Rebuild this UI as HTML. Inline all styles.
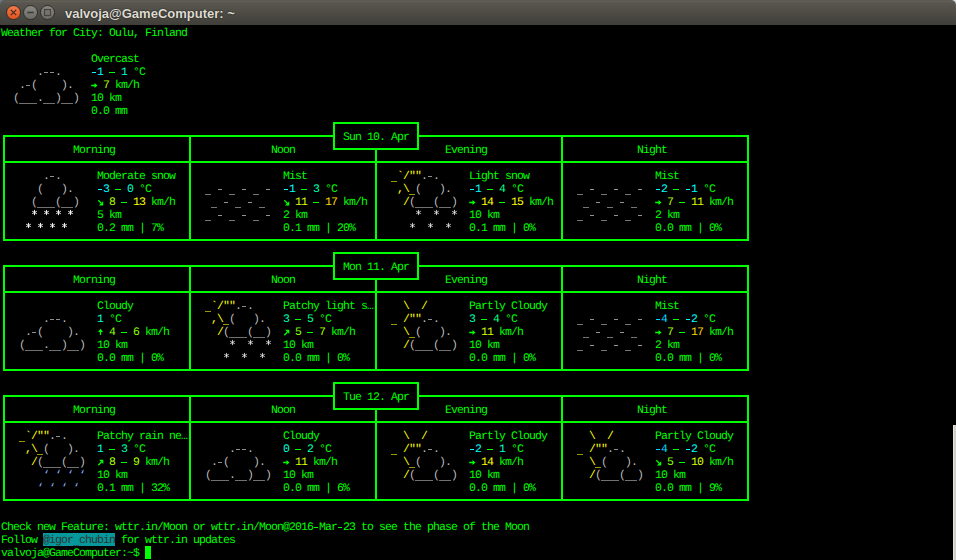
<!DOCTYPE html><html><head><meta charset="utf-8"><style>
*{margin:0;padding:0}
html,body{width:956px;height:560px;overflow:hidden;background:#000}
#w{position:absolute;left:0;top:0;width:956px;height:560px;background:#000;overflow:hidden}
.t{position:absolute;white-space:pre;font-family:"Liberation Mono",monospace;font-size:11.50px;line-height:13px;height:13px;letter-spacing:-0.9011px;color:#00ff00;text-rendering:geometricPrecision}
.b{font-weight:bold}
.u{position:relative;top:2px}
.h{position:absolute;height:2px;background:#00ff00}
.v{position:absolute;width:2px;background:#00ff00}
#tb{position:absolute;left:0;top:0;width:956px;height:25px;background:linear-gradient(#5c5a52,#3f3e39);border-radius:5px 5px 0 0}
#title{position:absolute;left:65px;top:5px;text-shadow:0 0 1.5px rgba(0,0,0,.9);font-family:"Liberation Sans",sans-serif;font-weight:bold;font-size:13px;line-height:17px;color:#dfdbd2;white-space:pre}
.btn{position:absolute;top:5px;width:15px;height:15px;border-radius:50%;box-sizing:border-box;border:1px solid #302f2b}
#cur{position:absolute;left:145px;top:546px;width:6px;height:13px;background:#00ff00}
#sb{position:absolute;left:953px;top:425px;width:3px;height:135px;background:#d3d0cc;border-left:1px solid #e6e3df;box-sizing:border-box}

</style></head><body><div id="w">
<div style="position:absolute;left:0;top:0;width:20px;height:8px;background:#6d778a"></div>
<div style="position:absolute;left:936px;top:0;width:20px;height:8px;background:#d6dbdf"></div>
<div id="tb"></div>
<div style="position:absolute;left:3px;top:1px;width:950px;height:1px;background:#625f55"></div>
<div class="btn" style="left:6px;background:linear-gradient(#f2784a,#e4531c)"></div>
<div class="btn" style="left:23px;background:linear-gradient(#8a8983,#6c6b66)"></div>
<div class="btn" style="left:40px;background:linear-gradient(#8a8983,#6c6b66)"></div>
<svg style="position:absolute;left:0;top:0" width="60" height="25"><g stroke="#3a2a22" stroke-width="1.1" fill="none"><path d="M10.8 9.8 L16.2 15.2 M16.2 9.8 L10.8 15.2"/></g><path d="M27.3 12.5 H33.7" stroke="#3c3b37" stroke-width="1.6"/><rect x="44.5" y="9.5" width="6" height="6" fill="#74736d" stroke="#45443f" stroke-width="1.2"/></svg>
<div id="title">valvoja@GameComputer: ~</div>
<div class="t" style="left:1px;top:27px">Weather for City: Oulu, Finland</div>
<div class="t" style="left:91px;top:53px">Overcast</div>
<div style="position:absolute;left:44px;top:72px;width:4px;height:1px;background:#bcbcbc;opacity:.75"></div>
<div style="position:absolute;left:50px;top:72px;width:4px;height:1px;background:#bcbcbc;opacity:.75"></div>
<div class="t" style="left:37px;top:66px;color:#bcbcbc">.  .</div>
<div style="position:absolute;left:92px;top:72px;width:4px;height:1px;background:#00ffff"></div>
<div class="t" style="left:91px;top:66px;color:#00ffff"> 1</div>
<div style="position:absolute;left:109px;top:72px;width:6px;height:1px;background:#00ff00"></div>
<div class="t" style="left:121px;top:66px;color:#00ffd7">1</div>
<div class="t" style="left:127px;top:66px"> °C</div>
<div style="position:absolute;left:26px;top:85px;width:4px;height:1px;background:#bcbcbc;opacity:.75"></div>
<div class="t" style="left:19px;top:79px;color:#bcbcbc">. (    ).</div>
<div class="t" style="left:103px;top:79px;color:#afff00">7</div>
<div class="t" style="left:109px;top:79px"> km/h</div>
<div style="position:absolute;left:19px;top:103px;width:6px;height:1px;background:#bcbcbc;opacity:.6"></div>
<div style="position:absolute;left:25px;top:103px;width:6px;height:1px;background:#bcbcbc;opacity:.6"></div>
<div style="position:absolute;left:31px;top:103px;width:6px;height:1px;background:#bcbcbc;opacity:.6"></div>
<div style="position:absolute;left:43px;top:103px;width:6px;height:1px;background:#bcbcbc;opacity:.6"></div>
<div style="position:absolute;left:49px;top:103px;width:6px;height:1px;background:#bcbcbc;opacity:.6"></div>
<div style="position:absolute;left:61px;top:103px;width:6px;height:1px;background:#bcbcbc;opacity:.6"></div>
<div style="position:absolute;left:67px;top:103px;width:6px;height:1px;background:#bcbcbc;opacity:.6"></div>
<div class="t" style="left:13px;top:92px;color:#bcbcbc">(   .  )  )</div>
<div class="t" style="left:91px;top:92px">10 km</div>
<div class="t" style="left:91px;top:105px">0.0 mm</div>
<div class="t" style="left:343px;top:131px">Sun 10. Apr</div>
<div class="t" style="left:73px;top:144px">Morning</div>
<div class="t" style="left:271px;top:144px">Noon</div>
<div class="t" style="left:445px;top:144px">Evening</div>
<div class="t" style="left:637px;top:144px">Night</div>
<div style="position:absolute;left:50px;top:176px;width:4px;height:1px;background:#bcbcbc;opacity:.75"></div>
<div class="t" style="left:43px;top:170px;color:#bcbcbc">. .</div>
<div class="t" style="left:97px;top:170px">Moderate snow</div>
<div class="t" style="left:283px;top:170px">Mist</div>
<div style="position:absolute;left:391px;top:181px;width:6px;height:1px;background:#ffff00;opacity:.6"></div>
<div class="t" style="left:391px;top:170px;color:#ffff00"> `/&quot;&quot;</div>
<div style="position:absolute;left:428px;top:176px;width:4px;height:1px;background:#bcbcbc;opacity:.75"></div>
<div class="t" style="left:421px;top:170px;color:#bcbcbc">. .</div>
<div class="t" style="left:469px;top:170px">Light snow</div>
<div class="t" style="left:655px;top:170px">Mist</div>
<div class="t" style="left:37px;top:183px;color:#bcbcbc">(   ).</div>
<div style="position:absolute;left:98px;top:189px;width:4px;height:1px;background:#00ffff"></div>
<div class="t" style="left:97px;top:183px;color:#00ffff"> 3</div>
<div style="position:absolute;left:115px;top:189px;width:6px;height:1px;background:#00ff00"></div>
<div class="t" style="left:127px;top:183px;color:#00ffd7">0</div>
<div class="t" style="left:133px;top:183px"> °C</div>
<div style="position:absolute;left:205px;top:194px;width:6px;height:1px;background:#c6c6c6;opacity:.6"></div>
<div style="position:absolute;left:218px;top:189px;width:4px;height:1px;background:#c6c6c6;opacity:.75"></div>
<div style="position:absolute;left:229px;top:194px;width:6px;height:1px;background:#c6c6c6;opacity:.6"></div>
<div style="position:absolute;left:242px;top:189px;width:4px;height:1px;background:#c6c6c6;opacity:.75"></div>
<div style="position:absolute;left:253px;top:194px;width:6px;height:1px;background:#c6c6c6;opacity:.6"></div>
<div style="position:absolute;left:266px;top:189px;width:4px;height:1px;background:#c6c6c6;opacity:.75"></div>
<div style="position:absolute;left:284px;top:189px;width:4px;height:1px;background:#00ffff"></div>
<div class="t" style="left:283px;top:183px;color:#00ffff"> 1</div>
<div style="position:absolute;left:301px;top:189px;width:6px;height:1px;background:#00ff00"></div>
<div class="t" style="left:313px;top:183px;color:#00ffaf">3</div>
<div class="t" style="left:319px;top:183px"> °C</div>
<div style="position:absolute;left:409px;top:194px;width:6px;height:1px;background:#ffff00;opacity:.6"></div>
<div class="t" style="left:397px;top:183px;color:#ffff00">,\ </div>
<div class="t" style="left:415px;top:183px;color:#bcbcbc">(   ).</div>
<div style="position:absolute;left:470px;top:189px;width:4px;height:1px;background:#00ffff"></div>
<div class="t" style="left:469px;top:183px;color:#00ffff"> 1</div>
<div style="position:absolute;left:487px;top:189px;width:6px;height:1px;background:#00ff00"></div>
<div class="t" style="left:499px;top:183px;color:#00ff87">4</div>
<div class="t" style="left:505px;top:183px"> °C</div>
<div style="position:absolute;left:577px;top:194px;width:6px;height:1px;background:#c6c6c6;opacity:.6"></div>
<div style="position:absolute;left:590px;top:189px;width:4px;height:1px;background:#c6c6c6;opacity:.75"></div>
<div style="position:absolute;left:601px;top:194px;width:6px;height:1px;background:#c6c6c6;opacity:.6"></div>
<div style="position:absolute;left:614px;top:189px;width:4px;height:1px;background:#c6c6c6;opacity:.75"></div>
<div style="position:absolute;left:625px;top:194px;width:6px;height:1px;background:#c6c6c6;opacity:.6"></div>
<div style="position:absolute;left:638px;top:189px;width:4px;height:1px;background:#c6c6c6;opacity:.75"></div>
<div style="position:absolute;left:656px;top:189px;width:4px;height:1px;background:#00ffff"></div>
<div class="t" style="left:655px;top:183px;color:#00ffff"> 2</div>
<div style="position:absolute;left:673px;top:189px;width:6px;height:1px;background:#00ff00"></div>
<div style="position:absolute;left:686px;top:189px;width:4px;height:1px;background:#00ffff"></div>
<div class="t" style="left:685px;top:183px;color:#00ffff"> 1</div>
<div class="t" style="left:697px;top:183px"> °C</div>
<div style="position:absolute;left:37px;top:207px;width:6px;height:1px;background:#bcbcbc;opacity:.6"></div>
<div style="position:absolute;left:43px;top:207px;width:6px;height:1px;background:#bcbcbc;opacity:.6"></div>
<div style="position:absolute;left:49px;top:207px;width:6px;height:1px;background:#bcbcbc;opacity:.6"></div>
<div style="position:absolute;left:61px;top:207px;width:6px;height:1px;background:#bcbcbc;opacity:.6"></div>
<div style="position:absolute;left:67px;top:207px;width:6px;height:1px;background:#bcbcbc;opacity:.6"></div>
<div class="t" style="left:31px;top:196px;color:#bcbcbc">(   (  )</div>
<div class="t" style="left:109px;top:196px;color:#afff00">8</div>
<div style="position:absolute;left:121px;top:202px;width:6px;height:1px;background:#00ff00"></div>
<div class="t" style="left:133px;top:196px;color:#ffff00">13</div>
<div class="t" style="left:145px;top:196px"> km/h</div>
<div style="position:absolute;left:211px;top:207px;width:6px;height:1px;background:#c6c6c6;opacity:.6"></div>
<div style="position:absolute;left:224px;top:202px;width:4px;height:1px;background:#c6c6c6;opacity:.75"></div>
<div style="position:absolute;left:235px;top:207px;width:6px;height:1px;background:#c6c6c6;opacity:.6"></div>
<div style="position:absolute;left:248px;top:202px;width:4px;height:1px;background:#c6c6c6;opacity:.75"></div>
<div style="position:absolute;left:259px;top:207px;width:6px;height:1px;background:#c6c6c6;opacity:.6"></div>
<div class="t" style="left:295px;top:196px;color:#d7ff00">11</div>
<div style="position:absolute;left:313px;top:202px;width:6px;height:1px;background:#00ff00"></div>
<div class="t" style="left:325px;top:196px;color:#ffd700">17</div>
<div class="t" style="left:337px;top:196px"> km/h</div>
<div class="t" style="left:403px;top:196px;color:#ffff00">/</div>
<div style="position:absolute;left:415px;top:207px;width:6px;height:1px;background:#bcbcbc;opacity:.6"></div>
<div style="position:absolute;left:421px;top:207px;width:6px;height:1px;background:#bcbcbc;opacity:.6"></div>
<div style="position:absolute;left:427px;top:207px;width:6px;height:1px;background:#bcbcbc;opacity:.6"></div>
<div style="position:absolute;left:439px;top:207px;width:6px;height:1px;background:#bcbcbc;opacity:.6"></div>
<div style="position:absolute;left:445px;top:207px;width:6px;height:1px;background:#bcbcbc;opacity:.6"></div>
<div class="t" style="left:409px;top:196px;color:#bcbcbc">(   (  )</div>
<div class="t" style="left:481px;top:196px;color:#ffff00">14</div>
<div style="position:absolute;left:499px;top:202px;width:6px;height:1px;background:#00ff00"></div>
<div class="t" style="left:511px;top:196px;color:#ffff00">15</div>
<div class="t" style="left:523px;top:196px"> km/h</div>
<div style="position:absolute;left:583px;top:207px;width:6px;height:1px;background:#c6c6c6;opacity:.6"></div>
<div style="position:absolute;left:596px;top:202px;width:4px;height:1px;background:#c6c6c6;opacity:.75"></div>
<div style="position:absolute;left:607px;top:207px;width:6px;height:1px;background:#c6c6c6;opacity:.6"></div>
<div style="position:absolute;left:620px;top:202px;width:4px;height:1px;background:#c6c6c6;opacity:.75"></div>
<div style="position:absolute;left:631px;top:207px;width:6px;height:1px;background:#c6c6c6;opacity:.6"></div>
<div class="t" style="left:667px;top:196px;color:#afff00">7</div>
<div style="position:absolute;left:679px;top:202px;width:6px;height:1px;background:#00ff00"></div>
<div class="t" style="left:691px;top:196px;color:#d7ff00">11</div>
<div class="t" style="left:703px;top:196px"> km/h</div>
<div class="t" style="left:97px;top:209px">5 km</div>
<div style="position:absolute;left:205px;top:220px;width:6px;height:1px;background:#c6c6c6;opacity:.6"></div>
<div style="position:absolute;left:218px;top:215px;width:4px;height:1px;background:#c6c6c6;opacity:.75"></div>
<div style="position:absolute;left:229px;top:220px;width:6px;height:1px;background:#c6c6c6;opacity:.6"></div>
<div style="position:absolute;left:242px;top:215px;width:4px;height:1px;background:#c6c6c6;opacity:.75"></div>
<div style="position:absolute;left:253px;top:220px;width:6px;height:1px;background:#c6c6c6;opacity:.6"></div>
<div style="position:absolute;left:266px;top:215px;width:4px;height:1px;background:#c6c6c6;opacity:.75"></div>
<div class="t" style="left:283px;top:209px">2 km</div>
<div class="t" style="left:469px;top:209px">10 km</div>
<div style="position:absolute;left:577px;top:220px;width:6px;height:1px;background:#c6c6c6;opacity:.6"></div>
<div style="position:absolute;left:590px;top:215px;width:4px;height:1px;background:#c6c6c6;opacity:.75"></div>
<div style="position:absolute;left:601px;top:220px;width:6px;height:1px;background:#c6c6c6;opacity:.6"></div>
<div style="position:absolute;left:614px;top:215px;width:4px;height:1px;background:#c6c6c6;opacity:.75"></div>
<div style="position:absolute;left:625px;top:220px;width:6px;height:1px;background:#c6c6c6;opacity:.6"></div>
<div style="position:absolute;left:638px;top:215px;width:4px;height:1px;background:#c6c6c6;opacity:.75"></div>
<div class="t" style="left:655px;top:209px">2 km</div>
<div class="t" style="left:97px;top:222px">0.2 mm | 7%</div>
<div class="t" style="left:283px;top:222px">0.1 mm | 20%</div>
<div class="t" style="left:469px;top:222px">0.1 mm | 0%</div>
<div class="t" style="left:655px;top:222px">0.0 mm | 0%</div>
<div class="t" style="left:343px;top:261px">Mon 11. Apr</div>
<div class="t" style="left:73px;top:274px">Morning</div>
<div class="t" style="left:271px;top:274px">Noon</div>
<div class="t" style="left:445px;top:274px">Evening</div>
<div class="t" style="left:637px;top:274px">Night</div>
<div class="t" style="left:97px;top:300px">Cloudy</div>
<div style="position:absolute;left:205px;top:311px;width:6px;height:1px;background:#ffff00;opacity:.6"></div>
<div class="t" style="left:205px;top:300px;color:#ffff00"> `/&quot;&quot;</div>
<div style="position:absolute;left:242px;top:306px;width:4px;height:1px;background:#bcbcbc;opacity:.75"></div>
<div class="t" style="left:235px;top:300px;color:#bcbcbc">. .</div>
<div class="t" style="left:283px;top:300px">Patchy light s…</div>
<div class="t" style="left:403px;top:300px;color:#ffff00">\  /</div>
<div class="t" style="left:469px;top:300px">Partly Cloudy</div>
<div class="t" style="left:655px;top:300px">Mist</div>
<div style="position:absolute;left:50px;top:319px;width:4px;height:1px;background:#bcbcbc;opacity:.75"></div>
<div style="position:absolute;left:56px;top:319px;width:4px;height:1px;background:#bcbcbc;opacity:.75"></div>
<div class="t" style="left:43px;top:313px;color:#bcbcbc">.  .</div>
<div class="t" style="left:97px;top:313px;color:#00ffd7">1</div>
<div class="t" style="left:103px;top:313px"> °C</div>
<div style="position:absolute;left:223px;top:324px;width:6px;height:1px;background:#ffff00;opacity:.6"></div>
<div class="t" style="left:211px;top:313px;color:#ffff00">,\ </div>
<div class="t" style="left:229px;top:313px;color:#bcbcbc">(   ).</div>
<div class="t" style="left:283px;top:313px;color:#00ffaf">3</div>
<div style="position:absolute;left:295px;top:319px;width:6px;height:1px;background:#00ff00"></div>
<div class="t" style="left:307px;top:313px;color:#00ff87">5</div>
<div class="t" style="left:313px;top:313px"> °C</div>
<div style="position:absolute;left:391px;top:324px;width:6px;height:1px;background:#ffff00;opacity:.6"></div>
<div class="t" style="left:391px;top:313px;color:#ffff00">  /&quot;&quot;</div>
<div style="position:absolute;left:428px;top:319px;width:4px;height:1px;background:#bcbcbc;opacity:.75"></div>
<div class="t" style="left:421px;top:313px;color:#bcbcbc">. .</div>
<div class="t" style="left:469px;top:313px;color:#00ffaf">3</div>
<div style="position:absolute;left:481px;top:319px;width:6px;height:1px;background:#00ff00"></div>
<div class="t" style="left:493px;top:313px;color:#00ff87">4</div>
<div class="t" style="left:499px;top:313px"> °C</div>
<div style="position:absolute;left:577px;top:324px;width:6px;height:1px;background:#c6c6c6;opacity:.6"></div>
<div style="position:absolute;left:590px;top:319px;width:4px;height:1px;background:#c6c6c6;opacity:.75"></div>
<div style="position:absolute;left:601px;top:324px;width:6px;height:1px;background:#c6c6c6;opacity:.6"></div>
<div style="position:absolute;left:614px;top:319px;width:4px;height:1px;background:#c6c6c6;opacity:.75"></div>
<div style="position:absolute;left:625px;top:324px;width:6px;height:1px;background:#c6c6c6;opacity:.6"></div>
<div style="position:absolute;left:638px;top:319px;width:4px;height:1px;background:#c6c6c6;opacity:.75"></div>
<div style="position:absolute;left:656px;top:319px;width:4px;height:1px;background:#00d7ff"></div>
<div class="t" style="left:655px;top:313px;color:#00d7ff"> 4</div>
<div style="position:absolute;left:673px;top:319px;width:6px;height:1px;background:#00ff00"></div>
<div style="position:absolute;left:686px;top:319px;width:4px;height:1px;background:#00ffff"></div>
<div class="t" style="left:685px;top:313px;color:#00ffff"> 2</div>
<div class="t" style="left:697px;top:313px"> °C</div>
<div style="position:absolute;left:32px;top:332px;width:4px;height:1px;background:#bcbcbc;opacity:.75"></div>
<div class="t" style="left:25px;top:326px;color:#bcbcbc">. (    ).</div>
<div class="t" style="left:109px;top:326px;color:#87ff00">4</div>
<div style="position:absolute;left:121px;top:332px;width:6px;height:1px;background:#00ff00"></div>
<div class="t" style="left:133px;top:326px;color:#87ff00">6</div>
<div class="t" style="left:139px;top:326px"> km/h</div>
<div class="t" style="left:217px;top:326px;color:#ffff00">/</div>
<div style="position:absolute;left:229px;top:337px;width:6px;height:1px;background:#bcbcbc;opacity:.6"></div>
<div style="position:absolute;left:235px;top:337px;width:6px;height:1px;background:#bcbcbc;opacity:.6"></div>
<div style="position:absolute;left:241px;top:337px;width:6px;height:1px;background:#bcbcbc;opacity:.6"></div>
<div style="position:absolute;left:253px;top:337px;width:6px;height:1px;background:#bcbcbc;opacity:.6"></div>
<div style="position:absolute;left:259px;top:337px;width:6px;height:1px;background:#bcbcbc;opacity:.6"></div>
<div class="t" style="left:223px;top:326px;color:#bcbcbc">(   (  )</div>
<div class="t" style="left:295px;top:326px;color:#87ff00">5</div>
<div style="position:absolute;left:307px;top:332px;width:6px;height:1px;background:#00ff00"></div>
<div class="t" style="left:319px;top:326px;color:#afff00">7</div>
<div class="t" style="left:325px;top:326px"> km/h</div>
<div style="position:absolute;left:409px;top:337px;width:6px;height:1px;background:#ffff00;opacity:.6"></div>
<div class="t" style="left:403px;top:326px;color:#ffff00">\ </div>
<div class="t" style="left:415px;top:326px;color:#bcbcbc">(   ).</div>
<div class="t" style="left:481px;top:326px;color:#d7ff00">11</div>
<div class="t" style="left:493px;top:326px"> km/h</div>
<div style="position:absolute;left:583px;top:337px;width:6px;height:1px;background:#c6c6c6;opacity:.6"></div>
<div style="position:absolute;left:596px;top:332px;width:4px;height:1px;background:#c6c6c6;opacity:.75"></div>
<div style="position:absolute;left:607px;top:337px;width:6px;height:1px;background:#c6c6c6;opacity:.6"></div>
<div style="position:absolute;left:620px;top:332px;width:4px;height:1px;background:#c6c6c6;opacity:.75"></div>
<div style="position:absolute;left:631px;top:337px;width:6px;height:1px;background:#c6c6c6;opacity:.6"></div>
<div class="t" style="left:667px;top:326px;color:#afff00">7</div>
<div style="position:absolute;left:679px;top:332px;width:6px;height:1px;background:#00ff00"></div>
<div class="t" style="left:691px;top:326px;color:#ffd700">17</div>
<div class="t" style="left:703px;top:326px"> km/h</div>
<div style="position:absolute;left:25px;top:350px;width:6px;height:1px;background:#bcbcbc;opacity:.6"></div>
<div style="position:absolute;left:31px;top:350px;width:6px;height:1px;background:#bcbcbc;opacity:.6"></div>
<div style="position:absolute;left:37px;top:350px;width:6px;height:1px;background:#bcbcbc;opacity:.6"></div>
<div style="position:absolute;left:49px;top:350px;width:6px;height:1px;background:#bcbcbc;opacity:.6"></div>
<div style="position:absolute;left:55px;top:350px;width:6px;height:1px;background:#bcbcbc;opacity:.6"></div>
<div style="position:absolute;left:67px;top:350px;width:6px;height:1px;background:#bcbcbc;opacity:.6"></div>
<div style="position:absolute;left:73px;top:350px;width:6px;height:1px;background:#bcbcbc;opacity:.6"></div>
<div class="t" style="left:19px;top:339px;color:#bcbcbc">(   .  )  )</div>
<div class="t" style="left:97px;top:339px">10 km</div>
<div class="t" style="left:283px;top:339px">10 km</div>
<div class="t" style="left:403px;top:339px;color:#ffff00">/</div>
<div style="position:absolute;left:415px;top:350px;width:6px;height:1px;background:#bcbcbc;opacity:.6"></div>
<div style="position:absolute;left:421px;top:350px;width:6px;height:1px;background:#bcbcbc;opacity:.6"></div>
<div style="position:absolute;left:427px;top:350px;width:6px;height:1px;background:#bcbcbc;opacity:.6"></div>
<div style="position:absolute;left:439px;top:350px;width:6px;height:1px;background:#bcbcbc;opacity:.6"></div>
<div style="position:absolute;left:445px;top:350px;width:6px;height:1px;background:#bcbcbc;opacity:.6"></div>
<div class="t" style="left:409px;top:339px;color:#bcbcbc">(   (  )</div>
<div class="t" style="left:469px;top:339px">10 km</div>
<div style="position:absolute;left:577px;top:350px;width:6px;height:1px;background:#c6c6c6;opacity:.6"></div>
<div style="position:absolute;left:590px;top:345px;width:4px;height:1px;background:#c6c6c6;opacity:.75"></div>
<div style="position:absolute;left:601px;top:350px;width:6px;height:1px;background:#c6c6c6;opacity:.6"></div>
<div style="position:absolute;left:614px;top:345px;width:4px;height:1px;background:#c6c6c6;opacity:.75"></div>
<div style="position:absolute;left:625px;top:350px;width:6px;height:1px;background:#c6c6c6;opacity:.6"></div>
<div style="position:absolute;left:638px;top:345px;width:4px;height:1px;background:#c6c6c6;opacity:.75"></div>
<div class="t" style="left:655px;top:339px">2 km</div>
<div class="t" style="left:97px;top:352px">0.0 mm | 0%</div>
<div class="t" style="left:283px;top:352px">0.0 mm | 0%</div>
<div class="t" style="left:469px;top:352px">0.0 mm | 0%</div>
<div class="t" style="left:655px;top:352px">0.0 mm | 0%</div>
<div class="t" style="left:343px;top:391px">Tue 12. Apr</div>
<div class="t" style="left:73px;top:404px">Morning</div>
<div class="t" style="left:271px;top:404px">Noon</div>
<div class="t" style="left:445px;top:404px">Evening</div>
<div class="t" style="left:637px;top:404px">Night</div>
<div style="position:absolute;left:19px;top:441px;width:6px;height:1px;background:#ffff00;opacity:.6"></div>
<div class="t" style="left:19px;top:430px;color:#ffff00"> `/&quot;&quot;</div>
<div style="position:absolute;left:56px;top:436px;width:4px;height:1px;background:#bcbcbc;opacity:.75"></div>
<div class="t" style="left:49px;top:430px;color:#bcbcbc">. .</div>
<div class="t" style="left:97px;top:430px">Patchy rain ne…</div>
<div class="t" style="left:283px;top:430px">Cloudy</div>
<div class="t" style="left:403px;top:430px;color:#ffff00">\  /</div>
<div class="t" style="left:469px;top:430px">Partly Cloudy</div>
<div class="t" style="left:589px;top:430px;color:#ffff00">\  /</div>
<div class="t" style="left:655px;top:430px">Partly Cloudy</div>
<div style="position:absolute;left:37px;top:454px;width:6px;height:1px;background:#ffff00;opacity:.6"></div>
<div class="t" style="left:25px;top:443px;color:#ffff00">,\ </div>
<div class="t" style="left:43px;top:443px;color:#bcbcbc">(   ).</div>
<div class="t" style="left:97px;top:443px;color:#00ffd7">1</div>
<div style="position:absolute;left:109px;top:449px;width:6px;height:1px;background:#00ff00"></div>
<div class="t" style="left:121px;top:443px;color:#00ffaf">3</div>
<div class="t" style="left:127px;top:443px"> °C</div>
<div style="position:absolute;left:236px;top:449px;width:4px;height:1px;background:#bcbcbc;opacity:.75"></div>
<div style="position:absolute;left:242px;top:449px;width:4px;height:1px;background:#bcbcbc;opacity:.75"></div>
<div class="t" style="left:229px;top:443px;color:#bcbcbc">.  .</div>
<div class="t" style="left:283px;top:443px;color:#00ffd7">0</div>
<div style="position:absolute;left:295px;top:449px;width:6px;height:1px;background:#00ff00"></div>
<div class="t" style="left:307px;top:443px;color:#00ffaf">2</div>
<div class="t" style="left:313px;top:443px"> °C</div>
<div style="position:absolute;left:391px;top:454px;width:6px;height:1px;background:#ffff00;opacity:.6"></div>
<div class="t" style="left:391px;top:443px;color:#ffff00">  /&quot;&quot;</div>
<div style="position:absolute;left:428px;top:449px;width:4px;height:1px;background:#bcbcbc;opacity:.75"></div>
<div class="t" style="left:421px;top:443px;color:#bcbcbc">. .</div>
<div style="position:absolute;left:470px;top:449px;width:4px;height:1px;background:#00ffff"></div>
<div class="t" style="left:469px;top:443px;color:#00ffff"> 2</div>
<div style="position:absolute;left:487px;top:449px;width:6px;height:1px;background:#00ff00"></div>
<div class="t" style="left:499px;top:443px;color:#00ffd7">1</div>
<div class="t" style="left:505px;top:443px"> °C</div>
<div style="position:absolute;left:577px;top:454px;width:6px;height:1px;background:#ffff00;opacity:.6"></div>
<div class="t" style="left:577px;top:443px;color:#ffff00">  /&quot;&quot;</div>
<div style="position:absolute;left:614px;top:449px;width:4px;height:1px;background:#bcbcbc;opacity:.75"></div>
<div class="t" style="left:607px;top:443px;color:#bcbcbc">. .</div>
<div style="position:absolute;left:656px;top:449px;width:4px;height:1px;background:#00d7ff"></div>
<div class="t" style="left:655px;top:443px;color:#00d7ff"> 4</div>
<div style="position:absolute;left:673px;top:449px;width:6px;height:1px;background:#00ff00"></div>
<div style="position:absolute;left:686px;top:449px;width:4px;height:1px;background:#00ffff"></div>
<div class="t" style="left:685px;top:443px;color:#00ffff"> 2</div>
<div class="t" style="left:697px;top:443px"> °C</div>
<div class="t" style="left:31px;top:456px;color:#ffff00">/</div>
<div style="position:absolute;left:43px;top:467px;width:6px;height:1px;background:#bcbcbc;opacity:.6"></div>
<div style="position:absolute;left:49px;top:467px;width:6px;height:1px;background:#bcbcbc;opacity:.6"></div>
<div style="position:absolute;left:55px;top:467px;width:6px;height:1px;background:#bcbcbc;opacity:.6"></div>
<div style="position:absolute;left:67px;top:467px;width:6px;height:1px;background:#bcbcbc;opacity:.6"></div>
<div style="position:absolute;left:73px;top:467px;width:6px;height:1px;background:#bcbcbc;opacity:.6"></div>
<div class="t" style="left:37px;top:456px;color:#bcbcbc">(   (  )</div>
<div class="t" style="left:109px;top:456px;color:#afff00">8</div>
<div style="position:absolute;left:121px;top:462px;width:6px;height:1px;background:#00ff00"></div>
<div class="t" style="left:133px;top:456px;color:#afff00">9</div>
<div class="t" style="left:139px;top:456px"> km/h</div>
<div style="position:absolute;left:218px;top:462px;width:4px;height:1px;background:#bcbcbc;opacity:.75"></div>
<div class="t" style="left:211px;top:456px;color:#bcbcbc">. (    ).</div>
<div class="t" style="left:295px;top:456px;color:#d7ff00">11</div>
<div class="t" style="left:307px;top:456px"> km/h</div>
<div style="position:absolute;left:409px;top:467px;width:6px;height:1px;background:#ffff00;opacity:.6"></div>
<div class="t" style="left:403px;top:456px;color:#ffff00">\ </div>
<div class="t" style="left:415px;top:456px;color:#bcbcbc">(   ).</div>
<div class="t" style="left:481px;top:456px;color:#ffff00">14</div>
<div class="t" style="left:493px;top:456px"> km/h</div>
<div style="position:absolute;left:595px;top:467px;width:6px;height:1px;background:#ffff00;opacity:.6"></div>
<div class="t" style="left:589px;top:456px;color:#ffff00">\ </div>
<div class="t" style="left:601px;top:456px;color:#bcbcbc">(   ).</div>
<div class="t" style="left:667px;top:456px;color:#87ff00">5</div>
<div style="position:absolute;left:679px;top:462px;width:6px;height:1px;background:#00ff00"></div>
<div class="t" style="left:691px;top:456px;color:#d7ff00">10</div>
<div class="t" style="left:703px;top:456px"> km/h</div>
<div class="t" style="left:43px;top:469px;color:#87afff">‘ ‘ ‘ ‘</div>
<div class="t" style="left:97px;top:469px">10 km</div>
<div style="position:absolute;left:211px;top:480px;width:6px;height:1px;background:#bcbcbc;opacity:.6"></div>
<div style="position:absolute;left:217px;top:480px;width:6px;height:1px;background:#bcbcbc;opacity:.6"></div>
<div style="position:absolute;left:223px;top:480px;width:6px;height:1px;background:#bcbcbc;opacity:.6"></div>
<div style="position:absolute;left:235px;top:480px;width:6px;height:1px;background:#bcbcbc;opacity:.6"></div>
<div style="position:absolute;left:241px;top:480px;width:6px;height:1px;background:#bcbcbc;opacity:.6"></div>
<div style="position:absolute;left:253px;top:480px;width:6px;height:1px;background:#bcbcbc;opacity:.6"></div>
<div style="position:absolute;left:259px;top:480px;width:6px;height:1px;background:#bcbcbc;opacity:.6"></div>
<div class="t" style="left:205px;top:469px;color:#bcbcbc">(   .  )  )</div>
<div class="t" style="left:283px;top:469px">10 km</div>
<div class="t" style="left:403px;top:469px;color:#ffff00">/</div>
<div style="position:absolute;left:415px;top:480px;width:6px;height:1px;background:#bcbcbc;opacity:.6"></div>
<div style="position:absolute;left:421px;top:480px;width:6px;height:1px;background:#bcbcbc;opacity:.6"></div>
<div style="position:absolute;left:427px;top:480px;width:6px;height:1px;background:#bcbcbc;opacity:.6"></div>
<div style="position:absolute;left:439px;top:480px;width:6px;height:1px;background:#bcbcbc;opacity:.6"></div>
<div style="position:absolute;left:445px;top:480px;width:6px;height:1px;background:#bcbcbc;opacity:.6"></div>
<div class="t" style="left:409px;top:469px;color:#bcbcbc">(   (  )</div>
<div class="t" style="left:469px;top:469px">10 km</div>
<div class="t" style="left:589px;top:469px;color:#ffff00">/</div>
<div style="position:absolute;left:601px;top:480px;width:6px;height:1px;background:#bcbcbc;opacity:.6"></div>
<div style="position:absolute;left:607px;top:480px;width:6px;height:1px;background:#bcbcbc;opacity:.6"></div>
<div style="position:absolute;left:613px;top:480px;width:6px;height:1px;background:#bcbcbc;opacity:.6"></div>
<div style="position:absolute;left:625px;top:480px;width:6px;height:1px;background:#bcbcbc;opacity:.6"></div>
<div style="position:absolute;left:631px;top:480px;width:6px;height:1px;background:#bcbcbc;opacity:.6"></div>
<div class="t" style="left:595px;top:469px;color:#bcbcbc">(   (  )</div>
<div class="t" style="left:655px;top:469px">10 km</div>
<div class="t" style="left:37px;top:482px;color:#87afff">‘ ‘ ‘ ‘</div>
<div class="t" style="left:97px;top:482px">0.1 mm | 32%</div>
<div class="t" style="left:283px;top:482px">0.0 mm | 6%</div>
<div class="t" style="left:469px;top:482px">0.0 mm | 0%</div>
<div class="t" style="left:655px;top:482px">0.0 mm | 9%</div>
<div style="position:absolute;left:314px;top:527px;width:4px;height:1px;background:#00ff00"></div>
<div style="position:absolute;left:338px;top:527px;width:4px;height:1px;background:#00ff00"></div>
<div class="t" style="left:1px;top:521px">Check new Feature: wttr.in/Moon or wttr.in/Moon@2016 Mar 23 to see the phase of the Moon</div>
<div class="t" style="left:1px;top:534px">Follow </div>
<div style="position:absolute;left:43px;top:533px;width:72px;height:13px;background:#06989a"></div>
<div style="position:absolute;left:73px;top:545px;width:6px;height:1px;background:#2e3436;opacity:.6"></div>
<div class="t" style="left:43px;top:534px;color:#2e3436">@igor chubin</div>
<div class="t" style="left:115px;top:534px"> for wttr.in updates</div>
<div class="t" style="left:1px;top:547px">valvoja@GameComputer:~$</div>
<div class="h" style="left:333px;top:122px;width:86px"></div>
<div class="h" style="left:3px;top:135px;width:332px"></div>
<div class="h" style="left:417px;top:135px;width:332px"></div>
<div class="h" style="left:333px;top:148px;width:86px"></div>
<div class="h" style="left:3px;top:161px;width:746px"></div>
<div class="h" style="left:3px;top:239px;width:746px"></div>
<div class="h" style="left:333px;top:252px;width:86px"></div>
<div class="h" style="left:3px;top:265px;width:332px"></div>
<div class="h" style="left:417px;top:265px;width:332px"></div>
<div class="h" style="left:333px;top:278px;width:86px"></div>
<div class="h" style="left:3px;top:291px;width:746px"></div>
<div class="h" style="left:3px;top:369px;width:746px"></div>
<div class="h" style="left:333px;top:382px;width:86px"></div>
<div class="h" style="left:3px;top:395px;width:332px"></div>
<div class="h" style="left:417px;top:395px;width:332px"></div>
<div class="h" style="left:333px;top:408px;width:86px"></div>
<div class="h" style="left:3px;top:421px;width:746px"></div>
<div class="h" style="left:3px;top:499px;width:746px"></div>
<div class="v" style="left:333px;top:122px;height:28px"></div>
<div class="v" style="left:417px;top:122px;height:28px"></div>
<div class="v" style="left:3px;top:135px;height:106px"></div>
<div class="v" style="left:747px;top:135px;height:106px"></div>
<div class="v" style="left:189px;top:135px;height:106px"></div>
<div class="v" style="left:561px;top:135px;height:106px"></div>
<div class="v" style="left:375px;top:148px;height:93px"></div>
<div class="v" style="left:333px;top:252px;height:28px"></div>
<div class="v" style="left:417px;top:252px;height:28px"></div>
<div class="v" style="left:3px;top:265px;height:106px"></div>
<div class="v" style="left:747px;top:265px;height:106px"></div>
<div class="v" style="left:189px;top:265px;height:106px"></div>
<div class="v" style="left:561px;top:265px;height:106px"></div>
<div class="v" style="left:375px;top:278px;height:93px"></div>
<div class="v" style="left:333px;top:382px;height:28px"></div>
<div class="v" style="left:417px;top:382px;height:28px"></div>
<div class="v" style="left:3px;top:395px;height:106px"></div>
<div class="v" style="left:747px;top:395px;height:106px"></div>
<div class="v" style="left:189px;top:395px;height:106px"></div>
<div class="v" style="left:561px;top:395px;height:106px"></div>
<div class="v" style="left:375px;top:408px;height:93px"></div>
<svg style="position:absolute;left:0;top:0" width="956" height="560"><path d="M91.2 85.5L95.5 85.5M98.3 200.3L101.5 203.5M284.3 200.3L287.5 203.5M469.2 202.5L473.5 202.5M655.2 202.5L659.5 202.5M100.5 335.0L100.5 331.0M284.3 335.2L287.5 332.0M469.2 332.5L473.5 332.5M655.2 332.5L659.5 332.5M98.3 465.2L101.5 462.0M283.2 462.5L287.5 462.5M469.2 462.5L473.5 462.5M656.3 460.3L659.5 463.5" stroke="#00ff00" stroke-width="1.3" fill="none"/><path d="M34.5 209.9V215.1M32.2 211.2L36.8 213.8M32.2 213.8L36.8 211.2M46.5 209.9V215.1M44.2 211.2L48.8 213.8M44.2 213.8L48.8 211.2M58.5 209.9V215.1M56.2 211.2L60.8 213.8M56.2 213.8L60.8 211.2M70.5 209.9V215.1M68.2 211.2L72.8 213.8M68.2 213.8L72.8 211.2M28.5 222.9V228.1M26.2 224.2L30.8 226.8M26.2 226.8L30.8 224.2M40.5 222.9V228.1M38.2 224.2L42.8 226.8M38.2 226.8L42.8 224.2M52.5 222.9V228.1M50.2 224.2L54.8 226.8M50.2 226.8L54.8 224.2M64.5 222.9V228.1M62.2 224.2L66.8 226.8M62.2 226.8L66.8 224.2" stroke="#eeeeee" stroke-width="1.0" fill="none"/><path d="M418.5 209.9V215.1M416.2 211.2L420.8 213.8M416.2 213.8L420.8 211.2M436.5 209.9V215.1M434.2 211.2L438.8 213.8M434.2 213.8L438.8 211.2M454.5 209.9V215.1M452.2 211.2L456.8 213.8M452.2 213.8L456.8 211.2M412.5 222.9V228.1M410.2 224.2L414.8 226.8M410.2 226.8L414.8 224.2M430.5 222.9V228.1M428.2 224.2L432.8 226.8M428.2 226.8L432.8 224.2M448.5 222.9V228.1M446.2 224.2L450.8 226.8M446.2 226.8L450.8 224.2M232.5 339.9V345.1M230.2 341.2L234.8 343.8M230.2 343.8L234.8 341.2M250.5 339.9V345.1M248.2 341.2L252.8 343.8M248.2 343.8L252.8 341.2M268.5 339.9V345.1M266.2 341.2L270.8 343.8M266.2 343.8L270.8 341.2M226.5 352.9V358.1M224.2 354.2L228.8 356.8M224.2 356.8L228.8 354.2M244.5 352.9V358.1M242.2 354.2L246.8 356.8M242.2 356.8L246.8 354.2M262.5 352.9V358.1M260.2 354.2L264.8 356.8M260.2 356.8L264.8 354.2" stroke="#eeeeee" stroke-width="0.8" fill="none"/><path d="M94.5 83.0L97.5 85.5L94.5 88.0ZM103.2 201.2L103.2 205.5L98.9 205.5ZM289.2 201.2L289.2 205.5L284.9 205.5ZM472.5 200.0L475.5 202.5L472.5 205.0ZM658.5 200.0L661.5 202.5L658.5 205.0ZM98.0 332.0L100.5 328.8L103.0 332.0ZM285.0 329.8L289.3 329.8L289.3 334.1ZM472.5 330.0L475.5 332.5L472.5 335.0ZM658.5 330.0L661.5 332.5L658.5 335.0ZM99.0 459.8L103.3 459.8L103.3 464.1ZM286.5 460.0L289.5 462.5L286.5 465.0ZM472.5 460.0L475.5 462.5L472.5 465.0ZM661.2 461.2L661.2 465.5L656.9 465.5Z" fill="#00ff00"/></svg>
<div id="cur"></div><div id="sb"></div>
</div></body></html>
